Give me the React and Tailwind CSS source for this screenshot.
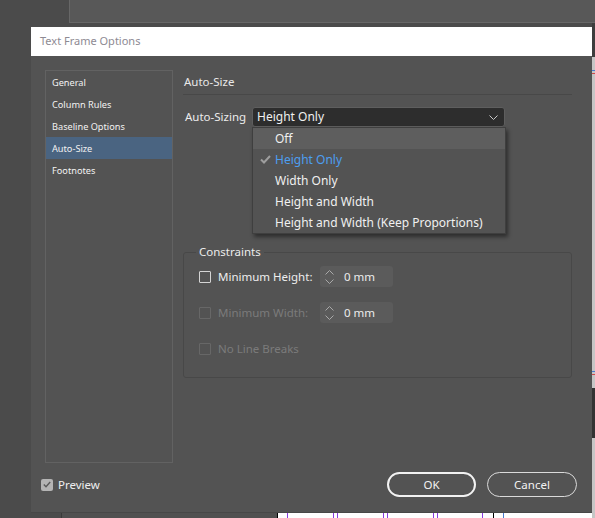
import React from 'react';

const font = { fontFamily: '"Noto Sans", "Open Sans", sans-serif' };

function Chevron({ up = false, className = '' }) {
  return (
    <svg width="9" height="5" viewBox="0 0 9 5" className={className}>
      <polyline
        points={up ? '0.5,4.5 4.5,0.5 8.5,4.5' : '0.5,0.5 4.5,4.5 8.5,0.5'}
        fill="none"
        stroke="currentColor"
        strokeWidth="1"
      />
    </svg>
  );
}

function Check({ className = '' }) {
  return (
    <svg width="11" height="9" viewBox="0 0 11 9" className={className}>
      <path d="M1 4.5 L4 7.5 L10 1" fill="none" stroke="currentColor" strokeWidth="2" />
    </svg>
  );
}

function Box({ disabled }) {
  return (
    <div
      className={
        'w-[12px] h-[12px] rounded-[1px] border ' +
        (disabled ? 'border-[#676767]' : 'border-[#d4d4d4]')
      }
    />
  );
}

function Spinner({ value }) {
  return (
    <div className="w-[73px] h-[21px] rounded-[3px] bg-[#5b5b5b] flex items-center pl-[5px] gap-[10px]">
      <div className="flex flex-col gap-[4px] text-[#a9a9a9]">
        <Chevron up />
        <Chevron />
      </div>
      <span className="text-[11.5px] text-[#ececec]">{value}</span>
    </div>
  );
}

function Row({ label, disabled, field }) {
  return (
    <div className="h-[21px] flex items-center">
      <Box disabled={disabled} />
      <span
        className={
          'ml-[7px] w-[102px] text-[11.5px] ' + (disabled ? 'text-[#7b7b7b]' : 'text-[#eeeeee]')
        }
      >
        {label}
      </span>
      {field}
    </div>
  );
}

const navItems = ['General', 'Column Rules', 'Baseline Options', 'Auto-Size', 'Footnotes'];
const menuItems = ['Off', 'Height Only', 'Width Only', 'Height and Width', 'Height and Width (Keep Proportions)'];

export default function App() {
  return (
    <div className="relative w-[595px] h-[518px] overflow-hidden bg-[#4b4b4b]" style={font}>
      {/* desktop behind the dialog */}
      <div className="absolute left-[69px] top-0 w-[526px] h-[23px] bg-[#585858] border-l border-b border-[#676767]" />
      <div className="absolute left-[592px] top-[23px] w-[3px] h-[34px] bg-[#3e3e3e]" />
      <div className="absolute left-[592px] top-[57px] w-[3px] h-[461px] bg-[#c6c6c6]">
        <div className="h-[13px]" />
        <div className="h-[1px] bg-[#4a7bd0]" />
        <div className="h-[2px]" />
        <div className="h-[1px] bg-[#d04a4a]" />
        <div className="h-[297px]" />
        <div className="h-[1px] bg-[#4a7bd0]" />
        <div className="h-[2px]" />
        <div className="h-[1px] bg-[#d04a4a]" />
        <div className="h-[13px]" />
        <div className="h-[50px] bg-[#333333]" />
      </div>
      <div className="absolute left-[61px] top-[513px] w-[216px] h-[5px] bg-[#505050] border-l border-[#3a3a3a]" />
      <div className="absolute left-[277px] top-[513px] w-[315px] h-[5px] bg-white border-l border-black flex">
        <div className="ml-[9px] w-[1px] bg-[#8a3be0]" />
        <div className="ml-[45px] w-[1px] bg-[#8a3be0]" />
        <div className="ml-[3px] w-[1px] bg-[#8a3be0]" />
        <div className="ml-[45px] w-[1px] bg-[#8a3be0]" />
        <div className="ml-[3px] w-[1px] bg-[#8a3be0]" />
        <div className="ml-[45px] w-[1px] bg-[#8a3be0]" />
        <div className="ml-[3px] w-[1px] bg-[#8a3be0]" />
        <div className="ml-[44px] w-[1px] bg-[#8a3be0]" />
        <div className="ml-[10px] w-[1px] bg-black" />
        <div className="ml-[9px] w-[1px] bg-[#4a7bd0]" />
      </div>

      {/* dialog window */}
      <div className="absolute left-[31px] top-[27px] w-[561px] h-[486px] bg-[#535353] flex flex-col border-b border-[#474747]">
        <div className="h-[29px] shrink-0 bg-white flex items-center pl-[9px] text-[11px] text-[#8e8a93]">
          Text Frame Options
        </div>

        <div className="flex gap-[10px] pl-[14px] pt-[14px]">
          <div className="w-[128px] h-[393px] border border-[#626262] flex flex-col">
            {navItems.map((item) => (
              <div
                key={item}
                className={
                  'h-[22px] flex items-center pl-[6px] pt-[1px] text-[9.2px] text-[#f2f2f2] ' +
                  (item === 'Auto-Size' ? 'bg-[#4a6481]' : '')
                }
              >
                {item}
              </div>
            ))}
          </div>

          <div className="w-[389px] flex flex-col">
            <div className="h-[25px] flex items-center pl-[1px] border-b border-[#484848] text-[11.5px] text-[#e8e8e8]">
              Auto-Size
            </div>

            <div className="mt-[12px] h-[20px] flex items-center">
              <span className="w-[69px] pl-[2px] text-[11.5px] text-[#ececec]">Auto-Sizing</span>
              <div className="relative w-[253px] h-[20px]">
                <div className="h-full rounded-[3px] bg-[#2d2d2d] border border-[#5e5e5e] flex items-center justify-between pl-[4px] pr-[6px] text-[12px] text-[#f0f0f0]">
                  <span>Height Only</span>
                  <Chevron className="text-[#c8c8c8]" />
                </div>
                <div className="absolute left-0 top-[20px] w-[254px] bg-[#535353] border border-[#3f3f3f] shadow-[2px_3px_4px_rgba(0,0,0,0.45)] flex flex-col">
                  {menuItems.map((item) => (
                    <div
                      key={item}
                      className={
                        'h-[21px] flex items-center text-[12px] ' +
                        (item === 'Off' ? 'bg-[#5e5e5e] ' : '') +
                        (item === 'Height Only' ? 'text-[#4d9ef0]' : 'text-[#f0f0f0]')
                      }
                    >
                      <span className="w-[22px] flex justify-center pl-[2px] text-[#9e9e9e]">
                        {item === 'Height Only' ? <Check /> : null}
                      </span>
                      {item}
                    </div>
                  ))}
                </div>
              </div>
            </div>

            <fieldset className="mt-[117px] h-[134px] border border-[#484848] rounded-[3px] px-[12px] pb-[18px]">
              <legend className="px-[3px] text-[11.5px] leading-[16px] text-[#ececec]">Constraints</legend>
              <div className="pl-[3px] pt-[6px] flex flex-col gap-[15px]">
                <Row label="Minimum Height:" field={<Spinner value="0 mm" />} />
                <Row label="Minimum Width:" disabled field={<Spinner value="0 mm" />} />
                <Row label="No Line Breaks" disabled />
              </div>
            </fieldset>
          </div>
        </div>

        <div className="mt-[9px] h-[25px] flex items-center justify-between pl-[10px] pr-[15px]">
          <div className="flex items-center gap-[5px]">
            <div className="w-[12px] h-[12px] rounded-[2px] bg-[#b4b4b4] flex items-center justify-center text-[#5a5a5a]">
              <svg width="8" height="7" viewBox="0 0 8 7">
                <path d="M0.8 3.5 L3 5.7 L7.2 1" fill="none" stroke="currentColor" strokeWidth="1.4" />
              </svg>
            </div>
            <span className="text-[11.5px] text-[#eeeeee]">Preview</span>
          </div>
          <div className="flex gap-[11px]">
            <button className="w-[89px] h-[25px] rounded-full border-2 border-[#f2f2f2] text-[11.5px] text-[#f2f2f2]">
              OK
            </button>
            <button className="w-[90px] h-[25px] rounded-full border border-[#dadada] text-[11.5px] text-[#f2f2f2]">
              Cancel
            </button>
          </div>
        </div>
      </div>
    </div>
  );
}
